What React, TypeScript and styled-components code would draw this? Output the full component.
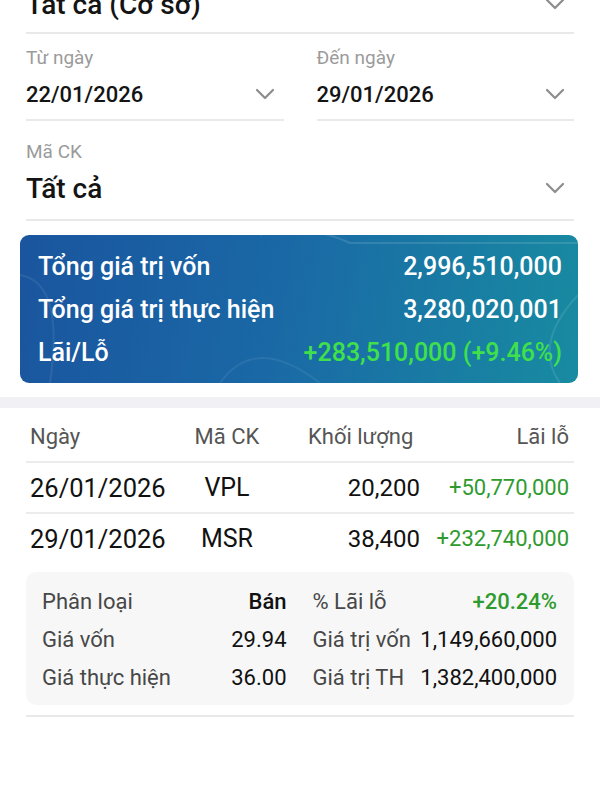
import React from 'react';
import styled, { createGlobalStyle } from 'styled-components';

const GlobalStyle = createGlobalStyle`
  html, body {
    margin: 0;
    padding: 0;
    background: #ffffff;
  }

  body {
    font-family: Roboto, "Noto Sans", "Liberation Sans", sans-serif;
    color: #111111;
  }
`;

const Page = styled.div`
  width: 600px;
  height: 800px;
  overflow: hidden;
  background: #ffffff;
`;

const Filters = styled.div`
  padding: 0 26px;
  margin-top: -14px;
`;

const FieldGrid = styled.div`
  display: grid;
  grid-template-columns: 1fr 1fr;
  column-gap: 33px;
`;

const Field = styled.div<{ $top: number; $bottom: number }>`
  padding: ${({ $top }) => $top}px 0 ${({ $bottom }) => $bottom}px;
  border-bottom: 2px solid #e9e9e9;
`;

const FieldLabel = styled.div`
  font-size: 19px;
  line-height: 24px;
  color: #9b9b9b;
`;

const FieldValue = styled.div<{ $large?: boolean }>`
  display: flex;
  align-items: center;
  justify-content: space-between;
  margin-top: ${({ $large }) => ($large ? 6 : 9)}px;
  height: ${({ $large }) => ($large ? 36 : 30)}px;
  font-size: ${({ $large }) => ($large ? 28 : 22)}px;
  font-weight: 500;
  color: #141414;

  &:first-child {
    margin-top: 0;
  }

  svg {
    margin-right: 9px;
  }
`;

const SummaryCard = styled.div`
  position: relative;
  overflow: hidden;
  margin: 14px 22px 0 20px;
  padding: 10px 16px 9px 18px;
  border-radius: 9px;
  background: linear-gradient(100deg, #1a559e 0%, #1a68a6 45%, #188ba1 100%);
`;

const CardDecor = styled.svg`
  position: absolute;
  inset: 0;
  width: 100%;
  height: 100%;
  pointer-events: none;
`;

const SummaryRow = styled.div`
  position: relative;
  display: flex;
  align-items: center;
  justify-content: space-between;
  height: 43px;
  font-size: 25px;
  font-weight: 500;
  color: #ffffff;
`;

const Profit = styled.span`
  color: #3fe04b;
`;

const Band = styled.div`
  height: 11px;
  margin-top: 14px;
  background: #f0f0f5;
`;

const Table = styled.div`
  padding: 0 26px;
`;

const TableRow = styled.div<{ $head?: boolean }>`
  display: grid;
  grid-template-columns: 144px 114px 146px 1fr;
  align-items: center;
  height: ${({ $head }) => ($head ? 50 : 49)}px;
  padding-top: ${({ $head }) => ($head ? 3 : 0)}px;
  font-size: 22px;
  color: ${({ $head }) => ($head ? '#555555' : '#111111')};
  border-bottom: 2px solid #ececec;

  &:last-of-type {
    border-bottom: none;
  }
`;

const Cell = styled.div<{ $align?: 'left' | 'center' | 'right'; $pl?: number; $pr?: number; $size?: number }>`
  text-align: ${({ $align }) => $align ?? 'left'};
  padding-left: ${({ $pl }) => $pl ?? 0}px;
  padding-right: ${({ $pr }) => $pr ?? 0}px;
  font-size: ${({ $size }) => ($size ? `${$size}px` : 'inherit')};
  white-space: nowrap;
`;

const Gain = styled(Cell)`
  color: #2f9b2f;
`;

const DetailWrap = styled.div`
  margin: 9px 26px 0;
  padding-bottom: 10px;
  border-bottom: 2px solid #e9e9e9;
`;

const DetailBox = styled.div`
  display: grid;
  grid-template-columns: 1fr 1fr;
  column-gap: 26px;
  padding: 10px 17px 9px 16px;
  border-radius: 10px;
  background: #f7f7f8;
`;

const DetailItem = styled.div`
  display: flex;
  align-items: center;
  justify-content: space-between;
  height: 38px;
  font-size: 22px;
  white-space: nowrap;
`;

const DetailLabel = styled.span`
  color: #474747;
`;

const DetailValue = styled.span<{ $strong?: boolean; $gain?: boolean }>`
  color: ${({ $gain }) => ($gain ? '#2f9b2f' : '#111111')};
  font-weight: ${({ $strong, $gain }) => ($strong || $gain ? 500 : 400)};
`;

function Chevron() {
  return (
    <svg width="20" height="12" viewBox="0 0 20 12" fill="none">
      <polyline points="2,2 10,10 18,2" stroke="#8c8c8c" strokeWidth="2.2" strokeLinecap="round" strokeLinejoin="round" />
    </svg>
  );
}

const trades = [
  { date: '26/01/2026', code: 'VPL', volume: '20,200', pnl: '+50,770,000' },
  { date: '29/01/2026', code: 'MSR', volume: '38,400', pnl: '+232,740,000' },
];

const details: [string, string, string, string, 'strong' | 'gain' | ''][] = [
  ['Phân loại', 'Bán', '% Lãi lỗ', '+20.24%', 'gain'],
  ['Giá vốn', '29.94', 'Giá trị vốn', '1,149,660,000', ''],
  ['Giá thực hiện', '36.00', 'Giá trị TH', '1,382,400,000', ''],
];

export default function App() {
  return (
    <Page>
      <GlobalStyle />
      <Filters>
        <Field $top={0} $bottom={10}>
          <FieldValue $large>
            Tất cả (Cơ sở)
            <Chevron />
          </FieldValue>
        </Field>

        <FieldGrid>
          <Field $top={12} $bottom={10}>
            <FieldLabel>Từ ngày</FieldLabel>
            <FieldValue>
              22/01/2026
              <Chevron />
            </FieldValue>
          </Field>
          <Field $top={12} $bottom={10}>
            <FieldLabel>Đến ngày</FieldLabel>
            <FieldValue>
              29/01/2026
              <Chevron />
            </FieldValue>
          </Field>
        </FieldGrid>

        <Field $top={19} $bottom={13}>
          <FieldLabel>Mã CK</FieldLabel>
          <FieldValue $large>
            Tất cả
            <Chevron />
          </FieldValue>
        </Field>
      </Filters>

      <SummaryCard>
        <CardDecor viewBox="0 0 558 148" preserveAspectRatio="none">
          <path d="M240 0 C 265 -10, 300 -6, 330 8 L 558 8" stroke="rgba(255,255,255,0.12)" strokeWidth="2" fill="none" />
          <path d="M0 40 C 30 45, 40 80, 30 148" stroke="rgba(255,255,255,0.08)" strokeWidth="2" fill="none" />
          <path d="M200 148 C 220 120, 250 110, 300 148" stroke="rgba(255,255,255,0.07)" strokeWidth="2" fill="none" />
          <path d="M558 60 C 530 90, 520 120, 540 148" stroke="rgba(255,255,255,0.1)" strokeWidth="2" fill="none" />
        </CardDecor>
        <SummaryRow>
          <span>Tổng giá trị vốn</span>
          <span>2,996,510,000</span>
        </SummaryRow>
        <SummaryRow>
          <span>Tổng giá trị thực hiện</span>
          <span>3,280,020,001</span>
        </SummaryRow>
        <SummaryRow>
          <span>Lãi/Lỗ</span>
          <Profit>+283,510,000 (+9.46%)</Profit>
        </SummaryRow>
      </SummaryCard>

      <Band />

      <Table>
        <TableRow $head>
          <Cell $pl={4}>Ngày</Cell>
          <Cell $align="center">Mã CK</Cell>
          <Cell $pl={24}>Khối lượng</Cell>
          <Cell $align="right" $pr={5}>Lãi lỗ</Cell>
        </TableRow>
        {trades.map((t) => (
          <TableRow key={t.date}>
            <Cell $pl={4} $size={25.5}>{t.date}</Cell>
            <Cell $align="center" $size={25}>{t.code}</Cell>
            <Cell $align="right" $pr={10} $size={24}>{t.volume}</Cell>
            <Gain $align="right" $pr={5} $size={22}>{t.pnl}</Gain>
          </TableRow>
        ))}
      </Table>

      <DetailWrap>
        <DetailBox>
          {details.map(([l1, v1, l2, v2, kind]) => (
            <React.Fragment key={l1}>
              <DetailItem>
                <DetailLabel>{l1}</DetailLabel>
                <DetailValue $strong={v1 === 'Bán'}>{v1}</DetailValue>
              </DetailItem>
              <DetailItem>
                <DetailLabel>{l2}</DetailLabel>
                <DetailValue $gain={kind === 'gain'}>{v2}</DetailValue>
              </DetailItem>
            </React.Fragment>
          ))}
        </DetailBox>
      </DetailWrap>
    </Page>
  );
}
